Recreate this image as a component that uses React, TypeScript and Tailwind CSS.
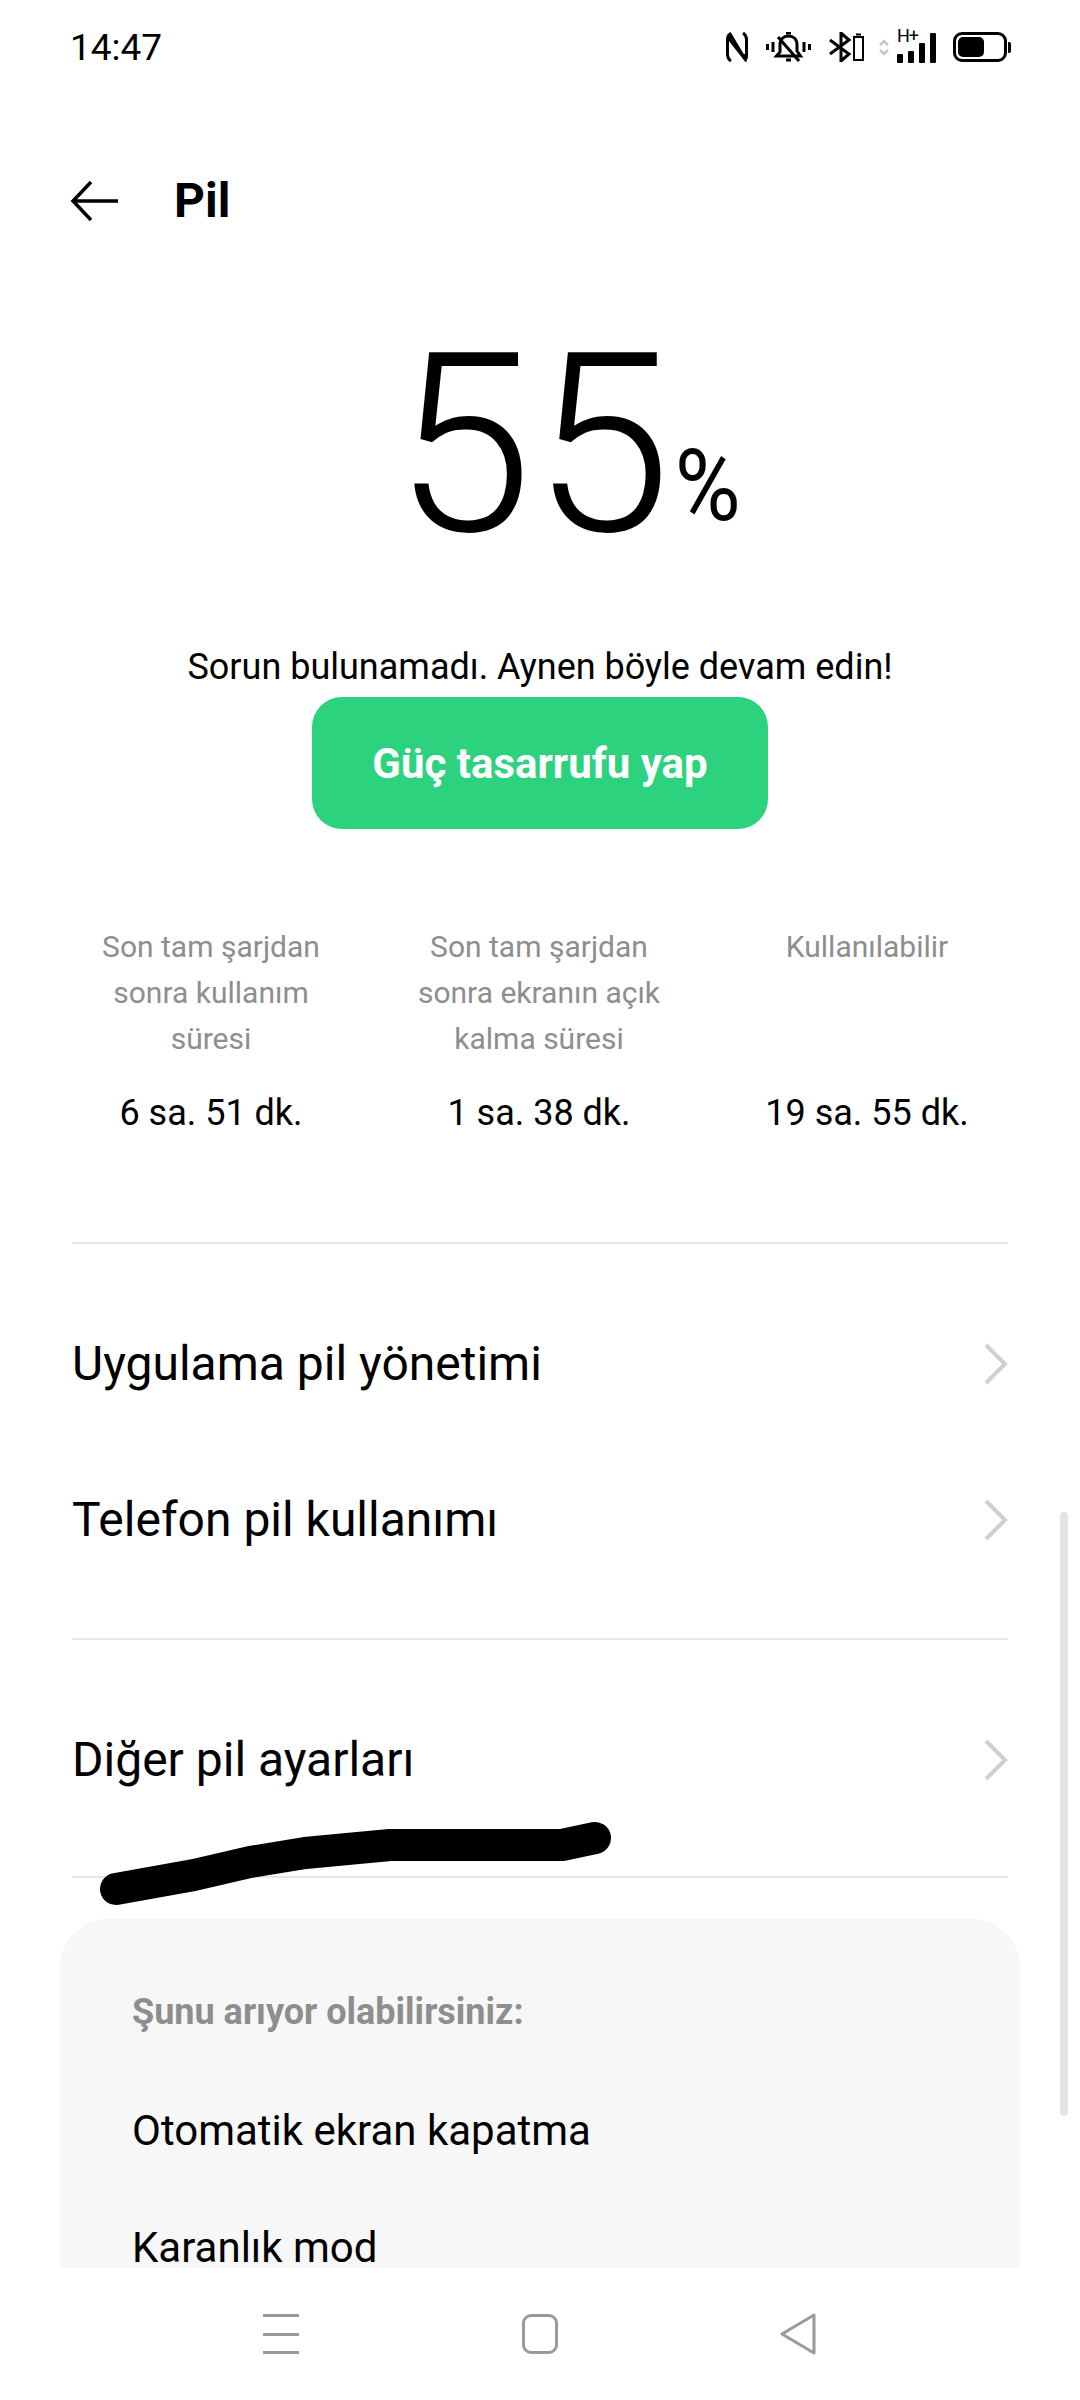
const Chevron = () => (
  <svg width="24" height="42" viewBox="0 0 24 42" fill="none" stroke="#cfcfcf" strokeWidth="4">
    <path d="M2 2 L21 21 L2 40" />
  </svg>
);

const StatusIcons = () => (
  <div className="flex items-center">
    {/* nfc */}
    <svg width="22" height="30" viewBox="0 0 22 30" fill="none" stroke="#000" strokeWidth="3">
      <path d="M5 29 C2 27 1.500 25 1.500 22 V8 C1.500 5 2 3 4 2 L19 27 C20 27 20.500 26 20.500 24 V8 C20.500 5 20 3 17 1" />
      <path d="M4 2 L4 8 L19 27 V22" />
    </svg>
    {/* silent bell */}
    <svg className="ml-[18px]" width="45" height="30" viewBox="0 0 45 30" fill="none" stroke="#000" strokeWidth="3">
      <path d="M1.500 12 V18 M7 10 V20 M38 10 V20 M43.500 12 V18" />
      <path d="M10.500 24 L14 20 V13 C14 7 17.500 4 22.500 4 C27.500 4 31 7 31 13 V19 L34.500 24 Z" />
      <path d="M20 1 H25 M20 28 H25 M12 5 L33 29" />
    </svg>
    {/* bluetooth + headset battery */}
    <svg className="ml-[18px]" width="36" height="30" viewBox="0 0 36 30" fill="none" stroke="#000" strokeWidth="3">
      <path d="M1 8 L20 22 L12 29 V1 L20 8 L1 22" />
      <rect x="25" y="5" width="9" height="23" strokeWidth="2" />
      <path d="M27 2.500 H32" strokeWidth="2" />
    </svg>
    {/* up down arrows */}
    <svg className="ml-[14px]" width="10" height="17" viewBox="0 0 10 17" fill="none" stroke="#c8c8c8" strokeWidth="2.500">
      <path d="M1 6 L5 2 L9 6 M1 11 L5 15 L9 11" />
    </svg>
    {/* signal */}
    <div className="relative ml-[8px] w-[40px] h-[32px]">
      <span className="absolute left-0 top-[-4px] text-[18px] leading-[18px] tracking-[-1px] text-black">H+</span>
      <div className="absolute inset-0 flex items-end gap-[5px]">
        <div className="w-[6px] h-[9px] bg-black rounded-[1px]" />
        <div className="w-[6px] h-[12px] bg-black rounded-[1px]" />
        <div className="w-[6px] h-[20px] bg-black rounded-[1px]" />
        <div className="w-[6px] h-[30px] bg-black rounded-[1px]" />
      </div>
    </div>
    {/* battery */}
    <div className="ml-[16px] flex items-center">
      <div className="w-[54px] h-[30px] rounded-[9px] border-[3px] border-black p-[2px]">
        <div className="w-[26px] h-full bg-black rounded-[5px]" />
      </div>
      <div className="ml-[1px] w-[3px] h-[11px] bg-black rounded-r-[2px]" />
    </div>
  </div>
);

const Stat = ({ lines, value }: { lines: string[]; value: string }) => (
  <div className="w-[328px] flex flex-col items-center">
    <div className="h-[138px] text-[30px] leading-[46px] text-[#8e8e8e] text-center">
      {lines.map((l) => (
        <div key={l}>{l}</div>
      ))}
    </div>
    <div className="mt-[28px] text-[36px] leading-[46px] text-black">{value}</div>
  </div>
);

const Row = ({ label }: { label: string }) => (
  <div className="h-[156px] flex items-center justify-between">
    <span className="text-[48px] text-black">{label}</span>
    <Chevron />
  </div>
);

const App = () => {
  return (
    <div className="relative w-[1080px] h-[2400px] bg-white overflow-hidden flex flex-col font-['Roboto',sans-serif]">
      <div className="h-[94px] shrink-0 pl-[70px] pr-[69px] flex items-center justify-between">
        <span className="pt-[2px] text-[37px] text-black">14:47</span>
        <StatusIcons />
      </div>

      <div className="h-[2174px] shrink-0 overflow-hidden">
        <div className="mt-[73px] h-[68px] pl-[70px] flex items-center">
          <svg width="50" height="40" viewBox="0 0 50 40" fill="none" stroke="#000" strokeWidth="3.500">
            <path d="M48 20 H3 M21 1 L3 20 L21 39" />
          </svg>
          <span className="ml-[54px] text-[48px] font-bold text-black">Pil</span>
        </div>

        <div className="mt-[93px] h-[235px] flex justify-center items-end pl-[58px]">
          <span className="text-[250px] leading-[235px] font-light text-black">55</span>
          <span className="mb-[29px] text-[100px] leading-[96px] text-black scale-x-90">%</span>
        </div>

        <div className="mt-[80px] text-center text-[36px] leading-[48px] text-black">
          Sorun bulunamadı. Aynen böyle devam edin!
        </div>

        <div className="flex justify-center">
          <button className="mt-[6px] w-[456px] h-[132px] rounded-[30px] bg-[#2dd27f] text-white text-[42px] font-bold">
            Güç tasarrufu yap
          </button>
        </div>

        <div className="mt-[95px] pl-[47px] flex">
          <Stat lines={["Son tam şarjdan", "sonra kullanım", "süresi"]} value="6 sa. 51 dk." />
          <Stat lines={["Son tam şarjdan", "sonra ekranın açık", "kalma süresi"]} value="1 sa. 38 dk." />
          <Stat lines={["Kullanılabilir"]} value="19 sa. 55 dk." />
        </div>

        <div className="mt-[106px] mx-[72px] border-t-2 border-[#e5e5e5] pt-[42px]">
          <Row label="Uygulama pil yönetimi" />
          <Row label="Telefon pil kullanımı" />
        </div>

        <div className="mt-[40px] mx-[72px] border-t-2 border-[#e5e5e5] pt-[42px]">
          <Row label="Diğer pil ayarları" />
        </div>

        <div className="mt-[38px] mx-[72px] border-t-2 border-[#e5e5e5]" />

        <div className="mt-[41px] mx-[60px] h-[500px] rounded-[48px] bg-[#f7f7f7] pl-[72px] pt-[71px]">
          <div className="text-[36px] leading-[44px] font-bold text-[#8e8e8e]">Şunu arıyor olabilirsiniz:</div>
          <div className="mt-[70px] text-[42px] leading-[54px] text-black">Otomatik ekran kapatma</div>
          <div className="mt-[63px] text-[42px] leading-[54px] text-black">Karanlık mod</div>
        </div>
      </div>

      <div className="flex-1 flex items-center justify-between pl-[263px] pr-[264px]">
        <div className="w-[36px] h-[40px] flex flex-col justify-between">
          <div className="h-[3px] bg-[#9a9a9a]" />
          <div className="h-[3px] bg-[#9a9a9a]" />
          <div className="h-[3px] bg-[#9a9a9a]" />
        </div>
        <div className="w-[36px] h-[40px] rounded-[9px] border-[3px] border-[#9a9a9a]" />
        <svg width="36" height="42" viewBox="0 0 36 42" fill="none" stroke="#9a9a9a" strokeWidth="3" strokeLinejoin="round">
          <path d="M34 2 L2 21 L34 40 Z" />
        </svg>
      </div>

      {/* scrollbar */}
      <div className="absolute left-[1060px] top-[1512px] w-[8px] h-[604px] rounded-full bg-[#e3e3e3]" />

      {/* scribble on top of the screenshot */}
      <svg className="absolute left-0 top-0" width="1080" height="2400" fill="none" stroke="#000" strokeWidth="32" strokeLinecap="round" strokeLinejoin="round">
        <path d="M116 1889 L194 1875 L250 1862 L305 1853 L390 1845 L562 1845 L595 1838" />
      </svg>
    </div>
  );
};

export default App;
